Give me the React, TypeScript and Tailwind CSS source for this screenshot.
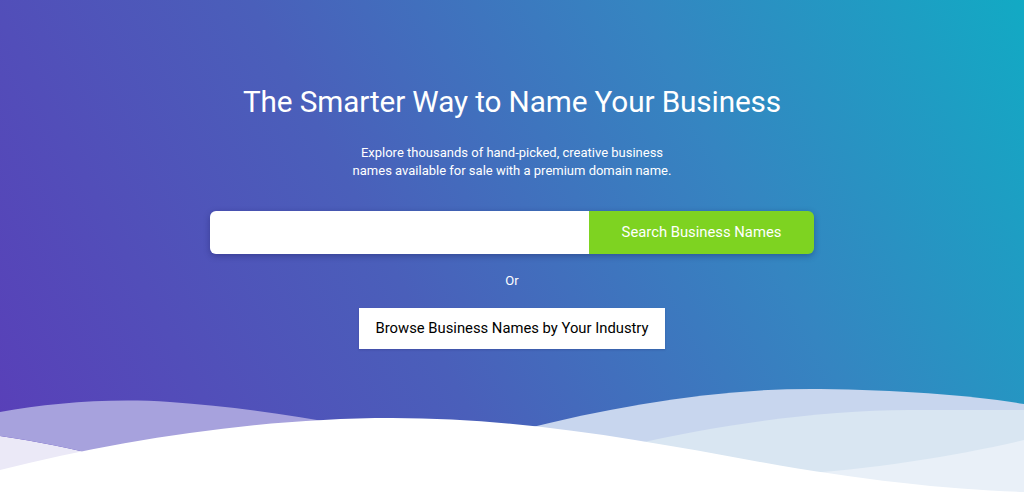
import React from 'react';

const Waves = () => {
  return (
    <svg
      className="absolute left-0 bottom-0 w-full h-[132px]"
      viewBox="0 370 1024 132"
      preserveAspectRatio="none"
    >
      {/* left pale layer */}
      <path d="M0,436 C40,442 70,448 110,458 L110,502 L0,502 Z" fill="#ebe9f7" />
      {/* left lavender wave */}
      <path
        d="M0,412 C50,403 110,398 170,402 C230,406 290,415 345,425 L110,458 C70,448 40,442 0,436 Z"
        fill="#a7a2dd"
      />
      {/* right back wave */}
      <path
        d="M520,430 C620,405 720,388 820,389 C900,390 970,395 1024,404 L1024,502 L520,502 Z"
        fill="#c8d6ee"
      />
      {/* right middle wave */}
      <path
        d="M630,445 C720,425 820,410 910,410 C960,410 1000,410 1024,410 L1024,502 L630,502 Z"
        fill="#d9e6f2"
      />
      {/* right front pale wave */}
      <path d="M790,474 C870,470 960,455 1024,440 L1024,502 L790,502 Z" fill="#e9f0f8" />
      {/* white front wave */}
      <path
        d="M0,470 C120,440 260,418 392,418 C520,418 640,440 760,462 C860,480 950,490 1024,492 L1024,502 L0,502 Z"
        fill="#ffffff"
      />
    </svg>
  );
};

const App = () => {
  return (
    <div
      className="relative h-[502px] w-full overflow-hidden bg-[linear-gradient(62deg,#5a3db8_0%,#4a5fba_40%,#3585c1_70%,#12aac4_100%)] font-['Roboto','Liberation_Sans',sans-serif]"
    >
      <div className="relative z-10 flex flex-col items-center pt-[84px]">
        <h1 className="text-[29.7px] leading-[36px] font-normal text-white tracking-[-0.1px]">
          The Smarter Way to Name Your Business
        </h1>

        <p className="mt-[24px] text-[13px] leading-[18px] text-white text-center">
          Explore thousands of hand-picked, creative business
          <br />
          names available for sale with a premium domain name.
        </p>

        {/* Search */}
        <div className="mt-[31px] flex w-[604px] h-[43px] rounded-[6px] overflow-hidden shadow-[0_2px_6px_rgba(20,20,80,0.35)]">
          <input
            type="text"
            className="flex-1 bg-white px-4 text-[15px] text-gray-800 outline-none"
          />
          <button className="w-[225px] bg-[#7ed321] text-white text-[14.8px] font-normal">
            Search Business Names
          </button>
        </div>

        <div className="mt-[18px] text-[13px] leading-[18px] text-white">Or</div>

        <button className="mt-[18px] w-[306px] h-[41px] bg-white text-black text-[14.8px] font-normal shadow-[0_1px_2px_rgba(20,20,80,0.2)]">
          Browse Business Names by Your Industry
        </button>
      </div>

      <Waves />
    </div>
  );
};

export default App;
